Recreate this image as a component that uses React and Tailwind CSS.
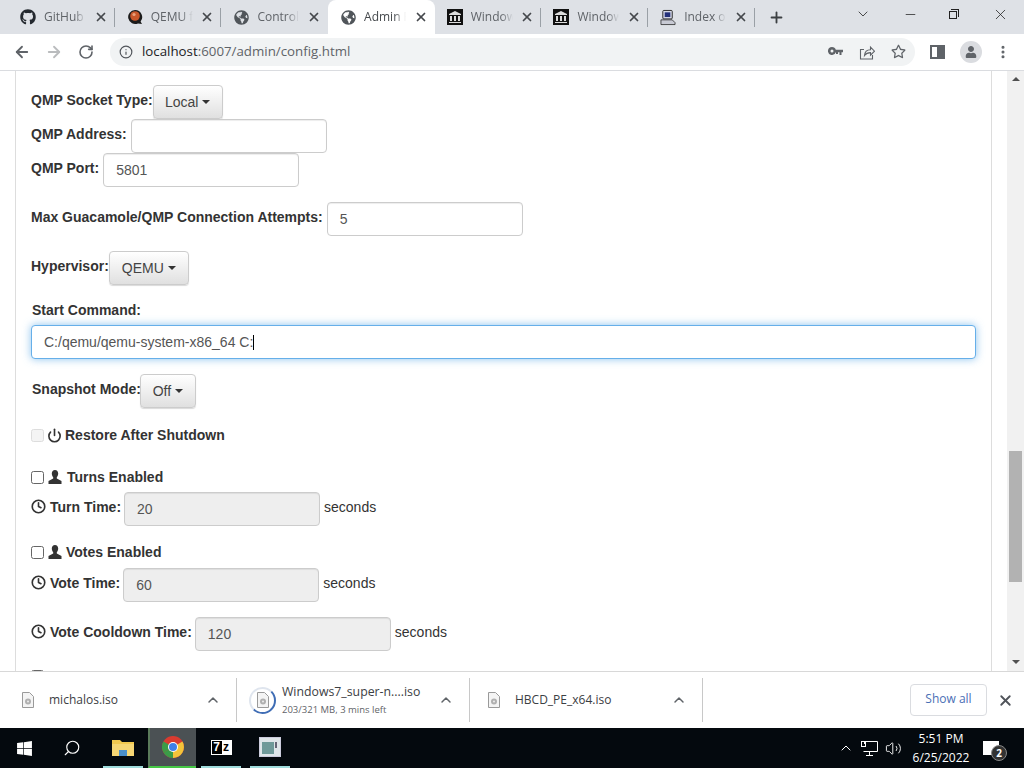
import React from "react";
import { FaGithub, FaGlobeAmericas, FaWindows, FaUser, FaRegStar } from "react-icons/fa";
import { Power, Clock, ArrowLeft, ArrowRight, RotateCw, Info, X, Plus, ChevronDown, ChevronUp, Minus, MoreVertical, Search, Volume2 } from "lucide-react";

const Archive = () => (
  <svg width="16" height="16" viewBox="0 0 16 16">
    <rect width="16" height="16" fill="#111" />
    <path d="M2 5 8 2l6 3v1H2zM3 7h2v5H3zM7 7h2v5H7zM11 7h2v5h-2zM2 13h12v1H2z" fill="#ddd" />
  </svg>
);
const Qemu = () => (
  <svg width="16" height="16" viewBox="0 0 16 16">
    <path d="M8 1a7 7 0 1 0 3 13.4L15 15l-1.400-2.600A7 7 0 0 0 8 1z" fill="#1c1c1c" />
    <circle cx="8" cy="7" r="4.800" fill="#c8572a" />
    <circle cx="7" cy="5.500" r="1.600" fill="#e9a27c" />
  </svg>
);
const Computer = () => (
  <svg width="17" height="17" viewBox="0 0 17 17">
    <rect x="3" y="1" width="10" height="9" rx="1" fill="#d5d8e6" stroke="#222" />
    <rect x="5" y="3" width="6" height="5" fill="#23307a" />
    <path d="M1 11h12l3 3v2H1z" fill="#c8cad4" stroke="#222" strokeWidth=".8" />
  </svg>
);
const KeyIcon = () => (
  <svg width="15" height="9" viewBox="0 0 15 9" className="ml-auto">
    <path fillRule="evenodd" d="M4 0a4 4 0 0 1 3.800 2.800H15v2.400h-1.500V8h-2V5.200H10V7H8V5.200h-.2A4 4 0 1 1 4 0zm0 2.500a1.500 1.500 0 1 0 0 3 1.500 1.500 0 0 0 0-3z" fill="#5f6368" />
  </svg>
);
const ShareIcon = () => (
  <svg width="16" height="16" viewBox="0 0 16 16" fill="none" stroke="#5f6368" strokeWidth="1.100" className="ml-[16px]">
    <path d="M5 5.500H1.500v9.500h12v-4" />
    <path d="M5.500 11.500c.3-3.700 2.800-5.700 6-5.700V3l4 4.200-4 4V8.600c-2.500 0-4.500.8-6 2.900z" />
  </svg>
);
const Bust = () => (
  <svg width="14" height="14" viewBox="0 0 14 14" className="ml-[4px]">
    <path d="M7 0c2 0 3.200 1.500 3.200 3.600 0 1.500-.6 2.800-1.400 3.600v1.300L13.500 11v3H.5v-3l4.700-2.500V7.200C4.400 6.400 3.800 5.100 3.800 3.600 3.800 1.500 5 0 7 0z" fill="#333" />
  </svg>
);

const tabs = [
  { t: "GitHub", i: <FaGithub size={16} className="text-[#24292f]" /> },
  { t: "QEMU for Windows", i: <Qemu /> },
  { t: "Control Panel", i: <FaGlobeAmericas size={15} className="text-[#50555a]" /> },
  { t: "Admin Panel", i: <FaGlobeAmericas size={15} className="text-[#50555a]" />, on: true },
  { t: "Windows 7", i: <Archive /> },
  { t: "Windows 7", i: <Archive /> },
  { t: "Index of /", i: <Computer /> },
];

const FileIcon = () => (
  <svg width="12" height="16" viewBox="0 0 12 16">
    <path d="M.5.500h7l4 4v11H.5z" fill="#f4f4f4" stroke="#9a9a9a" />
    <circle cx="6" cy="9.500" r="3" fill="#b0b0b0" />
    <circle cx="6" cy="9.500" r="1" fill="#eee" />
  </svg>
);

function Label({ children, className = "" }) {
  return <span className={`whitespace-nowrap text-[14px] font-bold leading-[20px] text-[#333] ${className}`}>{children}</span>;
}
function Field({ value = "", w = "w-[196px]", off, focus }) {
  const look = focus
    ? "bg-white border-[#66afe9] shadow-[0_0_8px_rgba(102,175,233,0.75)]"
    : off
      ? "bg-[#eeeeee] border-[#ccc] shadow-[inset_0_1px_1px_rgba(0,0,0,0.075)]"
      : "bg-white border-[#ccc] shadow-[inset_0_1px_1px_rgba(0,0,0,0.075)]";
  return (
    <div className={`h-[34px] ${w} rounded border px-3 text-[14px] leading-[32px] text-[#555] ${look}`}>
      {value}
      {focus && <span className="inline-block h-[15px] w-px translate-y-[3px] bg-black" />}
    </div>
  );
}
function Drop({ children, w }) {
  return (
    <div className={`flex h-[34px] ${w} items-center justify-center gap-1 rounded border border-[#ccc] bg-gradient-to-b from-white to-[#e0e0e0] text-[14px] text-[#444] shadow-[0_1px_1px_rgba(0,0,0,0.15)]`}>
      {children}
      <span className="h-0 w-0 border-x-[4px] border-t-[4px] border-x-transparent border-t-[#333]" />
    </div>
  );
}
function Check({ disabled }) {
  return <span className={`block h-[13px] w-[13px] shrink-0 rounded-[2.5px] border ${disabled ? "border-[#ddd] bg-[#f4f4f4]" : "border-[#666] bg-white"}`} />;
}
function TimeRow({ label, value, className }) {
  return (
    <div className={`flex items-start ${className}`}>
      <Clock size={15} strokeWidth={2.6} className="mt-[7px] text-[#333]" />
      <Label className="ml-[4px] mt-[5px]">{label}</Label>
      <div className="ml-[3px]"><Field value={value} off /></div>
      <span className="ml-1 mt-[5px] text-[14px] leading-[20px] text-[#333]">seconds</span>
    </div>
  );
}

export default function App() {
  return (
    <div className="flex h-[768px] w-[1024px] flex-col overflow-hidden bg-white font-['Liberation_Sans',Arial,sans-serif]">
      {/* tab strip */}
      <div className="flex h-[34px] shrink-0 bg-[#dee1e6] pl-[8px] font-['Open_Sans',sans-serif]">
        {tabs.map((x, n) => (
          <div
            key={n}
            className={`relative flex h-[34px] w-[106.7px] items-center pl-[12px] pr-[7px] text-[12px] ${
              x.on ? "rounded-t-lg bg-white text-[#45494d]" : "text-[#5f6368]"
            }`}
          >
            <span className="flex w-[16px] shrink-0 justify-center">{x.i}</span>
            <span className="ml-[8px] w-[42px] overflow-hidden whitespace-nowrap [mask-image:linear-gradient(to_right,black_72%,transparent)]">{x.t}</span>
            <X size={14} strokeWidth={3} className="ml-auto text-[#45484c]" />
            {n !== 2 && n !== 3 && <span className="absolute right-0 top-[8px] h-[19px] w-px bg-[#9aa0a6]" />}
          </div>
        ))}
        <div className="ml-[13px] flex h-[34px] items-center">
          <Plus size={17} strokeWidth={2.6} className="text-[#3c4043]" />
        </div>
        <div className="ml-auto flex h-[28px] items-center text-[#222]">
          <ChevronDown size={16} strokeWidth={1.2} className="mr-[32px]" />
          <Minus size={15} strokeWidth={1.2} className="mr-[31px]" />
          <span className="relative mr-[33px] block h-[10px] w-[10px]">
            <span className="absolute bottom-0 left-0 h-[8px] w-[8px] border border-[#222]" />
            <span className="absolute right-0 top-0 h-[8px] w-[8px] border-r border-t border-[#222]" />
          </span>
          <X size={17} strokeWidth={1.1} className="mr-[15px]" />
        </div>
      </div>

      {/* toolbar */}
      <div className="flex h-[37px] shrink-0 items-center border-b border-[#dadce0] bg-white pb-[1px]">
        <ArrowLeft size={18} strokeWidth={2.4} className="ml-[13px] text-[#5f6368]" />
        <ArrowRight size={18} strokeWidth={2.4} className="ml-[14px] text-[#babcbe]" />
        <RotateCw size={16} strokeWidth={2.4} className="ml-[15px] text-[#5f6368]" />
        <div className="ml-[16px] flex h-[28px] w-[805px] items-center rounded-full bg-[#f1f3f4] pl-[9px] font-['Open_Sans',sans-serif] text-[13.3px] text-[#5f6368]">
          <Info size={14} className="text-[#50545a]" />
          <span className="ml-[9px]"><span className="text-[#202124]">localhost</span>:6007/admin/config.html</span>
          <KeyIcon />
          <ShareIcon />
          <FaRegStar size={15} className="ml-[16px] mr-[9px] text-[#5f6368]" />
        </div>
        <span className="ml-[15px] flex h-[14px] w-[15px] justify-end border-2 border-[#5f6368]"><span className="h-full w-[6px] bg-[#5f6368]" /></span>
        <span className="ml-[15px] flex h-[22px] w-[22px] items-center justify-center overflow-hidden rounded-full bg-[#dadce0]">
          <FaUser size={12} className="text-[#5f6368]" />
        </span>
        <MoreVertical size={16} strokeWidth={2.6} className="ml-[13px] text-[#5f6368]" />
      </div>

      {/* page */}
      <div className="flex min-h-0 flex-1">
        <div className="min-w-0 flex-1 overflow-hidden pl-[15px]">
          <div className="h-full w-[977px] border-x border-[#ddd] pl-[15px] pt-[14px]">
            <div className="flex items-start">
              <Label className="mt-[5px]">QMP Socket Type:</Label>
              <Drop w="w-[70px]">Local</Drop>
            </div>
            <div className="flex items-start">
              <Label className="mt-[5px]">QMP Address:</Label>
              <div className="ml-[4px]"><Field /></div>
            </div>
            <div className="flex items-start">
              <Label className="mt-[5px]">QMP Port:</Label>
              <div className="ml-[4px]"><Field value="5801" /></div>
            </div>
            <div className="mt-[15px] flex items-start">
              <Label className="mt-[5px]">Max Guacamole/QMP Connection Attempts:</Label>
              <div className="ml-[4px]"><Field value="5" /></div>
            </div>
            <div className="mt-[15px] flex items-start">
              <Label className="mt-[5px]">Hypervisor:</Label>
              <Drop w="w-[80px]">QEMU</Drop>
            </div>
            <div className="mt-[13px] pl-px"><Label>Start Command:</Label></div>
            <div className="mt-[3px]"><Field w="w-[945px]" value="C:/qemu/qemu-system-x86_64 C:" focus /></div>
            <div className="mt-[15px] flex items-start pl-px">
              <Label className="mt-[5px]">Snapshot Mode:</Label>
              <div className="-ml-px"><Drop w="w-[56px]">Off</Drop></div>
            </div>
            <div className="mt-[17px] flex h-[20px] items-center">
              <Check disabled />
              <Power size={15} strokeWidth={2.6} className="ml-[3px] text-[#333]" />
              <Label className="ml-[3px]">Restore After Shutdown</Label>
            </div>
            <div className="mt-[22px] flex h-[20px] items-center">
              <Check />
              <Bust />
              <Label className="ml-[5px]">Turns Enabled</Label>
            </div>
            <TimeRow className="mt-[5px]" label="Turn Time:" value="20" />
            <div className="mt-[16px] flex h-[20px] items-center">
              <Check />
              <Bust />
              <Label className="ml-[4px]">Votes Enabled</Label>
            </div>
            <TimeRow className="mt-[6px]" label="Vote Time:" value="60" />
            <TimeRow className="mt-[15px]" label="Vote Cooldown Time:" value="120" />
            <div className="mt-[19px]"><Check /></div>
          </div>
        </div>
        <div className="flex w-[17px] shrink-0 flex-col items-center bg-[#f1f1f1]">
          <span className="mt-[6px] h-0 w-0 border-x-[4px] border-b-[4px] border-x-transparent border-b-[#505050]" />
          <span className="mt-[370px] h-[131px] w-[13px] bg-[#b2b2b2]" />
          <span className="mt-[78px] h-0 w-0 border-x-[4px] border-t-[4px] border-x-transparent border-t-[#505050]" />
        </div>
      </div>

      {/* downloads */}
      <div className="flex h-[57px] shrink-0 items-center border-t border-[#d8d8d8] bg-white font-['Open_Sans',sans-serif] text-[12px] text-[#3c4043]">
        <div className="flex h-[44px] w-[237px] items-center border-r border-[#c8c8c8] pl-[22px] pr-[15px]">
          <FileIcon />
          <span className="ml-[15px]">michalos.iso</span>
          <ChevronUp size={16} strokeWidth={2.2} className="ml-auto text-[#5f6368]" />
        </div>
        <div className="flex h-[44px] w-[233px] items-center border-r border-[#c8c8c8] pl-[12px] pr-[15px]">
          <span className="flex h-[27px] w-[27px] items-center justify-center rounded-full border-2 border-[#dfe5ee] border-b-[#3f6db5] border-r-[#3f6db5]"><FileIcon /></span>
          <span className="ml-[6px] flex flex-col">
            <span className="text-[12.3px] leading-[18px]">Windows7_super-n....iso</span>
            <span className="mt-[1px] text-[9.5px] leading-[16px] text-[#5f6368]">203/321 MB, 3 mins left</span>
          </span>
          <ChevronUp size={16} strokeWidth={2.2} className="ml-auto text-[#5f6368]" />
        </div>
        <div className="flex h-[44px] w-[233px] items-center border-r border-[#c8c8c8] pl-[18px] pr-[15px]">
          <FileIcon />
          <span className="ml-[15px]">HBCD_PE_x64.iso</span>
          <ChevronUp size={16} strokeWidth={2.2} className="ml-auto text-[#5f6368]" />
        </div>
        <div className="ml-auto flex h-[32px] w-[77px] items-center justify-center rounded border border-[#dadce0] pb-[2px] text-[12px] font-medium text-[#4a6fb5]">Show all</div>
        <X size={17} strokeWidth={2.6} className="ml-[10px] mr-[10px] text-[#50545a]" />
      </div>

      {/* taskbar */}
      <div className="flex h-[40px] shrink-0 items-stretch bg-[#04090e] font-['Open_Sans',sans-serif] text-white">
        <div className="flex w-[48px] items-center justify-center"><FaWindows size={17} /></div>
        <div className="flex w-[48px] items-center justify-center"><Search size={18} strokeWidth={1.5} className="-scale-x-100" /></div>
        <div className="ml-[7px] flex w-[40px] flex-col items-center justify-center border-b-2 border-[#9fdcdc]">
          <svg width="22" height="18" viewBox="0 0 22 18"><path d="M0 2h8l2 2h12v14H0z" fill="#f2c94f" /><rect y="6" width="22" height="12" fill="#f7d774" /><rect x="7" y="12" width="8" height="6" fill="#4a8fc9" /></svg>
        </div>
        <div className="ml-[5px] flex w-[48px] flex-col items-center justify-center border-b-2 border-l-2 border-[#46c846] border-l-[#5a7a5a] bg-[#4b5154]">
          <svg width="22" height="22" viewBox="0 0 22 22">
            <circle cx="11" cy="11" r="11" fill="#d93b30" />
            <path d="M11 11 1.500 16.500A11 11 0 0 1 1.500 5.500z" fill="#3a9c48" />
            <path d="M11 11l9.500-5.500A11 11 0 0 1 11 22l-1-1z" fill="#f3c43a" />
            <path d="M11 11 1.500 16.500A11 11 0 0 0 11 22z" fill="#3a9c48" />
            <circle cx="11" cy="11" r="5" fill="#fff" /><circle cx="11" cy="11" r="4" fill="#3f7fe8" />
          </svg>
        </div>
        <div className="ml-[5px] flex w-[40px] items-center justify-center border-b-2 border-[#9fdcdc]">
          <span className="flex h-[15px] w-[21px] border border-white bg-white font-['Liberation_Sans',sans-serif] text-[12px] font-bold leading-[13px]">
            <span className="w-[10px] bg-black text-center text-white">7</span>
            <span className="w-[9px] text-center text-black">z</span>
          </span>
        </div>
        <div className="ml-[9px] flex w-[40px] items-center justify-center border-b-2 border-[#9fdcdc]">
          <span className="flex h-[20px] w-[22px] gap-[1px] border border-[#ccd] bg-[#dfe6ea] p-[2px]">
            <span className="mt-[2px] w-[12px] bg-[#6f9a9a]" />
            <span className="mt-[2px] h-[6px] w-[2px] bg-[#667]" />
          </span>
        </div>
        <div className="ml-auto flex items-center">
          <ChevronUp size={16} strokeWidth={1.5} className="mr-[7px]" />
          <svg width="17" height="15" viewBox="0 0 17 15" fill="none" stroke="#fff" className="mr-[7px]"><path d="M3.500 3V.5h13v10h-14M8.500 10.500v3.500M5 14.500h7" /><rect x=".5" y=".5" width="4" height="5" /></svg>
          <Volume2 size={17} strokeWidth={1.3} className="mr-[8px]" />
          <div className="w-[62px] text-center text-[12px] leading-[19px]">
            <div>5:51 PM</div><div>6/25/2022</div>
          </div>
          <div className="relative ml-[11px] mr-[25px] h-[14px] w-[16px] bg-white">
            <span className="absolute -bottom-[6px] -right-[8px] flex h-[16px] w-[16px] items-center justify-center rounded-full border border-[#888] bg-[#333] text-[10px] font-bold leading-none">2</span>
          </div>
        </div>
      </div>
    </div>
  );
}
